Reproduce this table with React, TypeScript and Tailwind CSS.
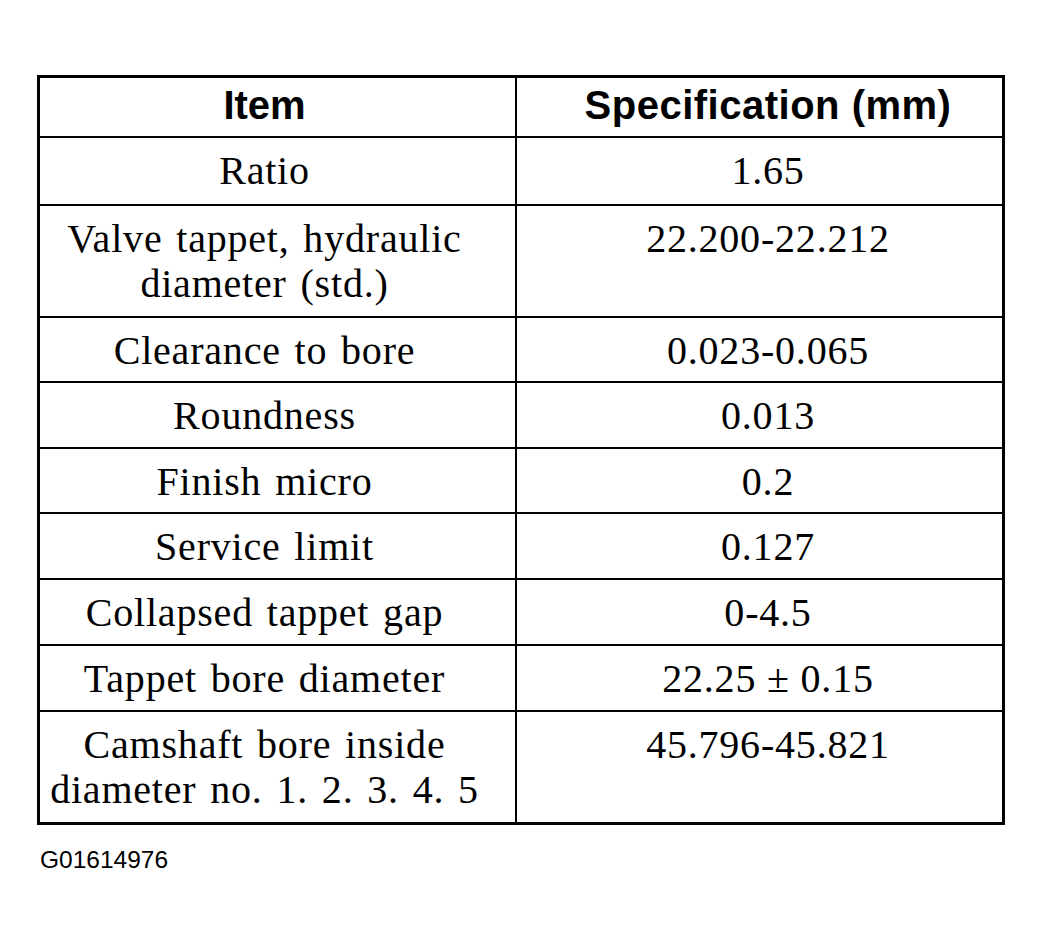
const rows: { item: string[]; spec: string; h: string }[] = [
  { item: ["Ratio"], spec: "1.65", h: "h-[68px]" },
  { item: ["Valve tappet, hydraulic", "diameter (std.)"], spec: "22.200-22.212", h: "h-[112px]" },
  { item: ["Clearance to bore"], spec: "0.023-0.065", h: "h-[65px]" },
  { item: ["Roundness"], spec: "0.013", h: "h-[66px]" },
  { item: ["Finish micro"], spec: "0.2", h: "h-[65px]" },
  { item: ["Service limit"], spec: "0.127", h: "h-[66px]" },
  { item: ["Collapsed tappet gap"], spec: "0-4.5", h: "h-[66px]" },
  { item: ["Tappet bore diameter"], spec: "22.25 ± 0.15", h: "h-[66px]" },
  { item: ["Camshaft bore inside", "diameter no. 1. 2. 3. 4. 5"], spec: "45.796-45.821", h: "h-[110px]" },
];

export default function App() {
  return (
    <div className="min-h-[946px] w-[1044px] bg-white pt-[75px] pl-[37px] text-black">
      <div className="grid w-[968px] grid-cols-[477px_485px] border-[3px] border-black">
        <div className="flex h-[60px] items-center justify-center border-r-2 border-b-2 border-black pr-[26px] pb-[5px] font-['Liberation_Sans',Arial,sans-serif] text-[40px] font-bold">
          Item
        </div>
        <div className="flex h-[60px] items-center justify-center border-b-2 border-black pl-[17px] pb-[5px] font-['Liberation_Sans',Arial,sans-serif] text-[40px] font-bold tracking-[0.5px]">
          Specification (mm)
        </div>
        {rows.map((row, i) => {
          const bottom = i === rows.length - 1 ? "" : "border-b-2";
          return [
            <div
              key={`item-${i}`}
              className={`${row.h} ${bottom} border-r-2 border-black pt-[10px] pr-[26px] text-center font-['Liberation_Serif','Times_New_Roman',serif] text-[40px] leading-[45px] tracking-[0.8px] [word-spacing:3px]`}
            >
              {row.item.map((line) => (
                <div key={line}>{line}</div>
              ))}
            </div>,
            <div
              key={`spec-${i}`}
              className={`${row.h} ${bottom} border-black pt-[10px] pl-[17px] text-center font-['Liberation_Serif','Times_New_Roman',serif] text-[40px] leading-[45px] tracking-[0.8px]`}
            >
              {row.spec}
            </div>,
          ];
        })}
      </div>
      <div className="mt-[21px] pl-[3px] font-['Liberation_Sans',Arial,sans-serif] text-[24.5px] leading-[28px]">
        G01614976
      </div>
    </div>
  );
}
